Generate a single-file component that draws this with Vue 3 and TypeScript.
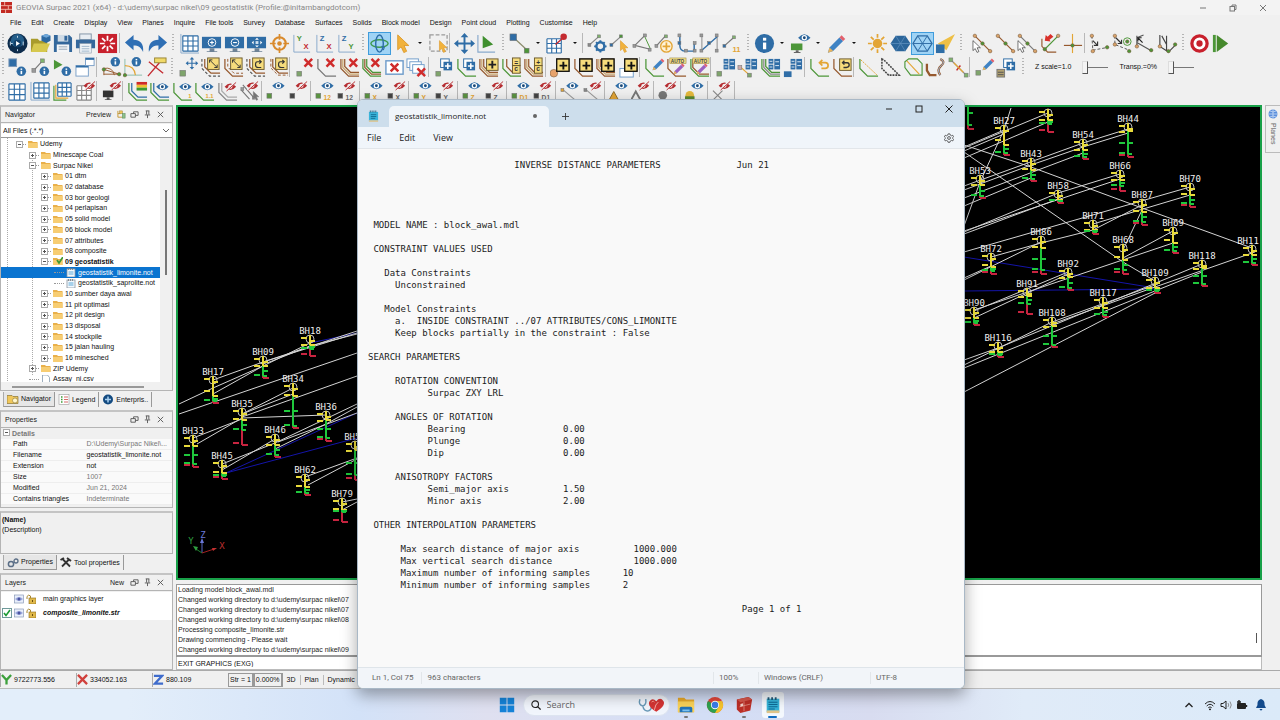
<script setup lang="ts">
import { ref } from 'vue'

const B = '#2f6da6'
const G = '#4c9638'
const O = '#e3a535'
const R = '#c42a30'
const T = '#96592e'

/* ---------- icon building blocks (22 x 22 grid) ---------- */
const sq = (x: number, y: number, c: string, s = 4) =>
  `<rect x="${x}" y="${y}" width="${s}" height="${s}" fill="${c}" stroke="#777" stroke-width=".6"/>`
const dot = (x: number, y: number, c: string, r = 1.8) =>
  `<circle cx="${x}" cy="${y}" r="${r}" fill="${c}" stroke="#7a5a3a" stroke-width=".6"/>`
const ln = (d: string, c: string, w = 1.2, dash = '') =>
  `<path d="${d}" fill="none" stroke="${c}" stroke-width="${w}" ${dash ? `stroke-dasharray="${dash}"` : ''}/>`
const txt = (x: number, y: number, t: string, c: string, s = 7) =>
  `<text x="${x}" y="${y}" font-size="${s}" font-weight="700" fill="${c}" font-family="Liberation Sans, Arial, sans-serif">${t}</text>`
const eye = (x: number, y: number, off = false) =>
  off
    ? `<path d="M${x - 6} ${y}q6-7 12 0q-6 7-12 0z" fill="#b52c30"/><circle cx="${x}" cy="${y}" r="2.2" fill="#fff" opacity=".85"/>${ln(`M${x - 5} ${y + 4.5}L${x + 5} ${y - 4.5}`, '#f0f0f0', 2)}${ln(`M${x - 4} ${y + 4.5}L${x + 6} ${y - 4.5}`, '#b52c30', 1)}`
    : `<path d="M${x - 6.5} ${y}q6.5-7.5 13 0q-6.500 7.500-13 0z" fill="${B}"/><circle cx="${x}" cy="${y}" r="2.800" fill="#fff"/><circle cx="${x}" cy="${y}" r="1.500" fill="#1c4a78"/>`
const info = (x: number, y: number, r = 5) =>
  `<circle cx="${x}" cy="${y}" r="${r}" fill="${B}"/><rect x="${x - r * 0.16}" y="${y - r * 0.1}" width="${r * 0.34}" height="${r * 0.7}" fill="#fff"/><rect x="${x - r * 0.16}" y="${y - r * 0.6}" width="${r * 0.34}" height="${r * 0.3}" fill="#fff"/>`
const monitor = (g: string) =>
  `<rect x="1" y="4" width="20" height="12" fill="${B}"/><path d="M9 16h5v3h3v1H6v-1h3z" fill="#6d8296"/>${g}`
const bend = (c: string, o = 0, w = 1.3, dash = '') =>
  ln(`M${2 + o} ${2}V${12 - o / 2}L${10 + o / 2} ${20 - o}H21`, c, w, dash)
const bends = bend(T) + bend('#c9a56c', 2) + bend(T, 4)
const cross = (x: number, y: number, s = 4) =>
  ln(`M${x - s} ${y - s}L${x + s} ${y + s}M${x + s} ${y - s}L${x - s} ${y + s}`, '#cf2b2b', 2.6)
const tile = (x: number, y: number, g = '', s = 12) =>
  `<rect x="${x}" y="${y}" width="${s}" height="${s}" fill="#f6dc7c" stroke="#6c5a2c" stroke-width="1"/>${g}`
const plus = (x: number, y: number, s: number, c: string, w = 1.6) =>
  ln(`M${x - s} ${y}H${x + s}M${x} ${y - s}V${y + s}`, c, w)
const copies =
  `<rect x="8" y="2" width="9" height="9" fill="#fff" stroke="${B}"/><rect x="11" y="5" width="9" height="9" fill="${B}"/>` + plus(15.5, 9.5, 3, '#fff')
const grid = (x: number, y: number, s: number, c = B) =>
  `<rect x="${x}" y="${y}" width="${s}" height="${s}" fill="#fff"/>` +
  ln(
    [0, 1, 2, 3].map(i => `M${x + (s * i) / 3} ${y}v${s}M${x} ${y + (s * i) / 3}h${s}`).join(''),
    c,
    1.2,
  )
const pencil = (x: number, y: number, s = 1, c = '#3f83c4') =>
  `<g transform="translate(${x} ${y}) scale(${s})"><path d="M0 16l1.500-5L11 1.500l3.500 3.500L5 14.500z" fill="${c}"/><path d="M0 16l1.500-5L5 14.500z" fill="#e9b35c"/><path d="M11 1.500L13-.5 16.500 3l-2 2z" fill="#e2606c"/></g>`
const pointer = (x: number, y: number, c: string, st = '#fff', s = 1) =>
  `<path transform="translate(${x} ${y}) scale(${s})" d="M0 0v13l3-2.600 2.300 5 2.500-1.100-2.300-5h4.200z" fill="${c}" stroke="${st}" stroke-width=".8"/>`
const axes = (a: string, ca: string, b: string, cb: string) =>
  ln('M3 2V20H20', '#88a9cc', 1) + txt(6, 8, a, ca, 8) + txt(13, 17, b, cb, 8)
const blocks = (x: number) =>
  `<rect x="${x}" y="2" width="5" height="5" fill="${B}"/><rect x="${x}" y="8" width="5" height="5" fill="${B}"/><rect x="${x + 6}" y="2" width="6" height="11" fill="${B}"/>` +
  ln(`M${x + 1} 4.500h3M${x + 1} 10.500h3M${x + 7} 5h4M${x + 7} 9h4`, '#dbe8f5', 1)
const diag = ln('M10 4L18 12M10 7V4H13M18 9V12H15', '#333', 1)
const turn = ln('M17 5H13Q11 5 11 8T14 11H17M15 3l2 2-2 2', '#333', 1.2)
const frame = '<rect x="7" y="2" width="13" height="13" fill="none" stroke="#111" stroke-width="1.300"/>'

const icons: Record<string, string> = {
  compass: `<circle cx="11" cy="11" r="10.500" fill="#0d2c4c"/><circle cx="11" cy="8" r="7" fill="#2f78aa" opacity=".65"/><circle cx="11" cy="11" r="4" fill="#123f68"/><path d="M9.500 8.500l4 2.500-4 2.500z" fill="#fff"/>` + ln('M3.500 9v4M4 11h2M17 9v4M11 3v2M11 17v2', '#c9dceb', 1),
  open: `<path d="M1 6h7l2 2h8v12H1z" fill="#a89b2c"/><path d="M4 11h17l-4 9H1z" fill="#d6c84e"/><path d="M12 3l5-2 4.500 2v5l-4.500 2.500L12 8z" fill="#2c68a0"/><path d="M12 3l5 2 4.500-2L17 1z" fill="#6ea6d8"/>`,
  save: `<path d="M2 2h16l3 3v15H2z" fill="#33679b"/><rect x="6" y="2" width="11" height="7" fill="#cfdbe6"/><rect x="13" y="3" width="3" height="5" fill="#33679b"/><rect x="5" y="12" width="13" height="8" fill="#f3f5f7"/>` + ln('M7 14.500h9M7 17h9', '#95a5b5', 1),
  print: `<rect x="5" y="1" width="12" height="6" fill="#e8edf2" stroke="#8293a5"/><path d="M1 7h20v9H1z" fill="#35689c"/><rect x="5" y="11" width="12" height="10" fill="#eef3f7" stroke="#8293a5" stroke-width=".6"/>` + ln('M7 14h8M7 16.500h8M7 19h8', '#9db4ca', 1),
  burst: `<rect x="1" y="1" width="20" height="20" fill="#c8202c"/>` + ln('M11 3v5M11 14v5M3 11h5M14 11h5M5.300 5.300l3.500 3.500M13.200 13.200l3.500 3.500M16.700 5.300l-3.500 3.500M8.800 13.200l-3.500 3.500', '#fff', 1.8),
  undo: `<path d="M1 10L10 2v5c7 0 11 4 10 13-2-5-5-7-10-7v5z" fill="#2f6fb4"/>`,
  redo: `<path d="M21 10L12 2v5c-7 0-11 4-10 13 2-5 5-7 10-7v5z" fill="#2f6fb4"/>`,
  grid: ln('M2 1V21H21', '#88a9cc', 1) + grid(4, 3, 16),
  zin: monitor(`<circle cx="11.500" cy="10" r="4" fill="none" stroke="#fff"/>` + plus(11.5, 10, 2, '#fff', 1.2)),
  zout: monitor(`<circle cx="11.500" cy="10" r="4" fill="none" stroke="#fff"/>` + ln('M9.500 10h4', '#fff', 1.2)),
  zall: monitor('<path d="M11.500 5l2 2h-4zM11.500 15l2-2h-4zM6 10l2-2v4zM17 10l-2-2v4z" fill="#fff"/><rect x="10" y="8.500" width="3" height="3" fill="#cfe0f0"/>'),
  aim: `<circle cx="11" cy="11" r="6.500" fill="none" stroke="#d98a2c" stroke-width="2.200"/><circle cx="11" cy="11" r="2.400" fill="#d98a2c"/>` + ln('M11 1v6M11 15v6M1 11h6M15 11h6', '#d98a2c', 1.8),
  yx: axes('Y', G, 'X', R),
  zx: axes('Z', B, 'X', R),
  zy: axes('Z', B, 'Y', G),
  orbit: `<ellipse cx="11" cy="11" rx="9" ry="4" fill="none" stroke="#3f9a4c" stroke-width="1.500"/><ellipse cx="11" cy="11" rx="4" ry="9" fill="none" stroke="#2c6ea8" stroke-width="1.500"/>` + ln('M13 14l3 1-1 3', '#2c6ea8'),
  arrow: pointer(6, 2, '#f1b23c', '#dd9a2c', 1.2),
  marquee: `<rect x="2" y="2" width="18" height="17" fill="none" stroke="#999" stroke-width="1.300" stroke-dasharray="4 2"/>` + pointer(12, 8, '#f1b23c', '#dd9a2c', 0.8),
  move: `<path d="M11 0l4 4.500h-3v5.500h5.500V7L22 11l-4.500 4v-3H12v5.500h3L11 22l-4-4.500h3V12H4.500v3L0 11l4.500-4v3H10V4.500H7z" fill="${B}"/>`,
  tri: ln('M2 2V20H20', '#88a9cc', 1.2) + `<path d="M7 3l11 9-11 4z" fill="#3f8f2e"/>`,
  seg: ln('M5 5L18 17', '#8a8a6a', 1.2) + sq(1, 1, B, 7) + sq(16, 16, G, 5),
  pin: grid(1, 6, 15) + ln('M18 5L10 12', R, 1.5) + `<circle cx="18.500" cy="4" r="3.400" fill="${R}"/>`,
  gear: ln('M3 12L12 4', '#888') + sq(1, 11, '#888', 3) + sq(11, 2, '#7fb36c', 3) + `<circle cx="14" cy="14" r="4.200" fill="none" stroke="${B}" stroke-width="2.600"/>` + ln('M14 7.500v3M14 17.500v3M7.500 14h3M17.500 14h3M9.500 9.500l2 2M16.500 16.500l2 2M18.500 9.500l-2 2M11.500 16.500l-2 2', B, 2),
  segptr: ln('M3 12L12 4', '#888') + sq(1, 11, B, 3) + sq(11, 2, G, 3) + pointer(12, 8, '#f1b23c', '#dd9a2c', 0.8),
  tripts: ln('M3 13L13 3M3 13L19 17', '#777') + ln('M13 3L19 16', G, 1) + sq(1, 12, '#999', 3) + sq(12, 1, '#999', 3) + sq(17, 16, '#999', 3),
  addpt: ln('M3 13L12 3', '#777') + sq(1, 12, '#999', 3) + sq(11, 2, '#7fb36c', 3) + `<circle cx="13" cy="14" r="6" fill="#fff3d8" stroke="${O}" stroke-width="1.400"/>` + plus(13, 14, 4, O, 1.8),
  ells: ln('M3 4V13Q3 19 9 19H18V11', B, 1.5) + sq(1, 1, '#999', 3) + sq(1, 9, B, 3) + sq(8, 17, '#999', 3) + sq(17, 17, '#999', 3) + sq(17, 9, '#999', 3),
  enn: ln('M3 3V19M19 3V19', '#999') + ln('M3 18L19 4', B, 1.4) + sq(1, 1, '#999', 3) + sq(1, 17, '#999', 3) + sq(17, 1, '#999', 3) + sq(17, 17, '#999', 3) + sq(9, 9, B, 3),
  ones: ln('M3 13L12 5', '#777') + sq(1, 12, B, 3) + sq(11, 3, '#7fb36c', 3) + txt(11, 20, '11', O, 8),
  info: info(11, 11, 10),
  moneye: `<rect x="1" y="11" width="12" height="7" fill="${G}"/><path d="M6 18h3v2h2v1H4v-1h2z" fill="#666"/>` + eye(15, 5),
  pencil: pencil(2, 3, 1.1),
  sun: `<circle cx="11" cy="11" r="5" fill="${O}"/>` + ln('M11 1v4M11 17v4M1 11h4M17 11h4M4 4l3 3M15 15l3 3M18 4l-3 3M7 15l-3 3', O, 1.8),
  hex: `<path d="M6 3h10l5.500 8-5.500 8H6L.5 11z" fill="#2b659a"/>` + ln('M6 3l10 16M16 3L6 19M1 11h20', '#5d8fbd', 0.8),
  hexw: `<path d="M6 3h10l5 8-5 8H6L1 11z" fill="none" stroke="${B}" stroke-width="1.300"/>` + ln('M6 3l10 16M16 3L6 19M1 11h20', B, 1),
  cone: `<path d="M21 1L3 11l9 7z" fill="#eebf45"/><rect x="1" y="12" width="9" height="9" fill="${B}"/>`,
  l1: ln('M2 2L20 20', T) + dot(3, 3, '#d9a36a') + dot(11, 11, G) + dot(19, 19, '#d9a36a') + pointer(1, 8, '#fff', '#222', 0.8),
  l2: ln('M2 2L20 20', T) + dot(3, 3, '#d9a36a') + dot(11, 11, G) + dot(19, 19, '#d9a36a'),
  l3: ln('M2 2L20 20', '#777') + dot(3, 3, '#d9a36a') + dot(11, 11, G) + dot(19, 19, '#d9a36a') + pointer(1, 8, '#fff', '#222', 0.8),
  l4: ln('M2 6V14L8 20H17', T) + ln('M5 17L19 3', G) + `<path d="M5 8l1-6 2 2 3-3 3 3-4 3 1 2z" fill="#d9302a"/>` + dot(19, 3, '#d9a36a') + dot(5, 17, G),
  l5: ln('M11 1V21', O) + ln('M2 13H21', T) + dot(11, 13, G),
  l6: ln('M3 3L4 18L20 15', '#555', 1, '3 2') + ln('M4 8l5 5M9 9v4H5', '#333', 1.2) + dot(3, 3, '#d9a36a') + dot(4, 19, '#d9a36a') + dot(19, 15, G),
  l7: ln('M3 3L3 12L18 18', '#555', 1, '3 2') + `<circle cx="16" cy="9" r="4" fill="none" stroke="${G}"/>` + ln('M4 5l6 6M10 7v4H6', '#333', 1.2) + dot(3, 3, '#d9a36a') + dot(3, 12, '#d9a36a') + dot(16, 9, G) + dot(18, 19, G),
  l8: ln('M3 3V14M3 5L10 2M3 10L19 19', '#555', 1.2) + ln('M4 5l5 5M4 9V5H8', '#222', 1.2) + dot(3, 14, '#d9a36a') + dot(18, 18, G),
  l9: ln('M3 2V14L12 20L20 12M5 3L10 12M10 3V18', '#444', 1.2) + dot(3, 14, '#d9a36a') + dot(12, 19, G) + dot(19, 12, G),
  target: `<circle cx="11" cy="11" r="8" fill="#fff" stroke="#c8202c" stroke-width="3.400"/><circle cx="11" cy="11" r="3.300" fill="#c8202c"/>`,
  play: `<rect x="2" y="2" width="3" height="18" fill="${G}"/><path d="M6 2l12 9-12 9z" fill="#46892c"/>`,

  sqinfo: `<rect x="2" y="2" width="8" height="8" fill="${B}" stroke="#7b98b8"/>` + info(15, 15),
  seginfo: ln('M4 14L13 4', '#777') + sq(2, 12, '#999') + sq(11, 2, '#7fb36c') + info(15, 15),
  triinfo: `<path d="M2 3l9 5-9 5z" fill="${G}"/>` + info(15, 15),
  win: `<rect x="1" y="9" width="13" height="11" fill="#fff" stroke="#7ba0c8"/><rect x="1" y="9" width="13" height="2" fill="${B}"/><rect x="11" y="1" width="9" height="8" fill="#fff" stroke="#7ba0c8"/><rect x="11" y="1" width="9" height="2" fill="${B}"/>`,
  arcinfo: ln('M3 13L19 18H3M3 13V19M3 12Q12 10 14 19', T, 1) + dot(3, 13, G) + dot(19, 18, G) + info(15, 5),
  anginfo: ln('M2 2V19H20', '#8ba', 1) + ln('M2 9Q12 9 13 19', O) + dot(2, 19, G) + info(14, 5),
  ruler: ln('M2 20L14 6M3 5L18 17', R, 1.4) + `<rect x="9" y="1" width="12" height="5" fill="#f0d968" stroke="#998536"/>`,
  sqmove: sq(2, 14, '#7fa56c', 6) + `<path transform="translate(8 0) scale(.6)" d="M11 0l4 4.500h-3v5.500h5.500V7L22 11l-4.500 4v-3H12v5.500h3L11 22l-4-4.500h3V12H4.500v3L0 11l4.500-4v3H10V4.500H7z" fill="${B}"/>`,
  t1: bend('#555', 0, 1.2, '3 2') + bend(T, 3) + tile(8, 1, `<g transform="translate(0 -1)">${diag}</g>`),
  t2: bend(T) + bend(T, 3, 1, '3 2') + tile(8, 1, `<g transform="translate(0 -1)">${diag}</g>`),
  t3: bend('#555', 0, 1.2, '3 2') + bend(T, 3) + tile(8, 1, turn),
  t4: bend(T, 1, 1, '3 2') + bend(T, 3) + tile(8, 1, turn),
  d1: sq(3, 15, '#7fa56c', 5) + cross(15, 6),
  d2: bend('#777') + cross(15, 6),
  d3: bends + cross(15, 6),
  d4: bend(G) + bend(T, 2) + bend(G, 4) + cross(15, 6),
  d5: `<rect x="2" y="4" width="18" height="14" fill="#fff" stroke="#6f9cca" stroke-width="1.500"/>` + cross(11, 11),
  d6: `<rect x="1" y="2" width="12" height="9" fill="#fff" stroke="#6f9cca"/><rect x="4" y="5" width="12" height="9" fill="#fff" stroke="#6f9cca"/><rect x="7" y="8" width="12" height="9" fill="#fff" stroke="#6f9cca"/>` + cross(16, 16),
  c1: sq(3, 15, '#7fa56c', 5) + copies,
  c2: bend(G) + copies,
  c3: bends + tile(9, 2, plus(15, 8, 4, '#222', 2)),
  c4: bend(G) + bend(T, 4) + tile(12, 1, txt(14, 8, '=', '#333'), 8) + tile(12, 9, txt(14, 15, 'c', '#333'), 8),
  c5: bends + tile(12, 1, txt(14, 8, '+', '#333'), 8) + tile(12, 9, txt(14, 15, 'c', '#333'), 8),
  p1: dot(4, 17, '#e7a36c', 4) + tile(7, 2, plus(14, 9, 4, '#111', 2) + frame, 13),
  p2: bend(T) + tile(7, 2, plus(14, 9, 4, '#111', 2) + frame, 13),
  p3: bends + tile(7, 2, plus(14, 9, 4, '#111', 2) + frame, 13),
  p4: `<rect x="2" y="12" width="14" height="9" fill="#fff" stroke="#6f9cca"/>` + tile(7, 2, plus(14, 9, 4, '#111', 2) + frame, 13),
  e1: bend(G) + pencil(9, 2, 0.75),
  e2: bend(T) + `<rect x="4" y="1" width="17" height="6" fill="#f2df86" stroke="#9c8a48" stroke-width=".6"/>` + txt(5, 6, 'AUTO', '#444', 5) + pencil(8, 7, 0.7, '#9a62c0'),
  e3: bend(G) + bend(T, 2) + `<rect x="4" y="1" width="17" height="6" fill="#f2df86" stroke="#9c8a48" stroke-width=".6"/>` + txt(5, 6, 'AUTO', '#444', 5) + pencil(8, 7, 0.7, '#9a62c0'),
  b1: sq(2, 15, '#7fa56c', 5) + blocks(9),
  b2: ln('M3 10L12 18', O) + sq(1, 9, '#caa') + sq(11, 17, '#7fa56c') + blocks(9),
  b3: bend(G) + bend('#888', 2) + bend(G, 4) + blocks(9),
  b4: `<rect x="2" y="15" width="8" height="6" fill="${B}"/>` + blocks(9),
  u1: bend(G) + ln('M11 6H17Q20 6 20 9T17 12H13M14 3l-3 3 3 3', O, 1.8),
  u2: bend(T) + tile(8, 2, ln('M11 6H16Q18 6 18 8.500T15 11H12M13 4l-2 2 2 2', '#333', 1.4)),
  k1: bend(G) + ln('M3 3L20 19', O, 1, '2 1'),
  k2: ln('M2 2V12L9 19H20L4 3z', '#444', 1.6, '2 1'),
  k3: ln('M2 11V5L6 2H15L20 7V19H8z', G) + ln('M4 4L17 18', O),
  k4: ln('M2 7V14L5 19H12M16 2Q22 5 17 9T16 19', T, 2.4) + ln('M16 2Q22 5 17 9T16 19', '#9dc0e4', 1),
  k5: ln('M2 2L20 20', '#888') + ln('M9 14l4-5', R, 1.6) + sq(1, 1, '#7fb36c') + sq(17, 17, '#7fb36c') + ln('M6 6L16 16', O),
  k6: sq(2, 14, '#7fa56c', 5) + pencil(9, 2, 0.75),
  k7: `<rect x="1" y="13" width="8" height="8" fill="#b0a070" stroke="#777"/>` + ln('M2 16h6M2 18.500h6', '#555', 1) + copies,

  g1: grid(2, 3, 17),
  g2: ln('M1 1V20H21', '#88a9cc', 1) + grid(4, 2, 16),
  g3: ln('M2 5V20H15', G) + ln('M4 4V18H17', O) + grid(6, 2, 14),
  g4: grid(2, 5, 15, '#888') + eye(15, 5, true),
  g5: `<rect x="2" y="10" width="11" height="7" fill="#333"/><path d="M6 17h3v2h2v1H4v-1h2z" fill="#555"/>` + eye(15, 5, true),
  s1: bend(G) + bend(B, 3) + '<rect x="10" y="1" width="11" height="3" fill="#d02a2a"/><rect x="10" y="4" width="11" height="3" fill="#f0c030"/><rect x="10" y="7" width="11" height="3" fill="#3c9a34"/>',
  s2: bend(G) + bend(B, 3) + eye(14, 6),
  s3: bend(G) + eye(14, 6) + txt(17, 18, '1', O, 6),
  s4: bend(G) + eye(14, 6) + txt(12, 18, '1.1', O, 6),
  s5: bend('#888') + bend('#aaa', 3) + eye(14, 6, true),
  s6: ln('M4 4L16 18M2 9L11 19', '#777') + sq(2, 7, '#999', 3) + sq(14, 16, '#999', 3) + eye(14, 5, true) + pointer(15, 11, '#777', '#777', 0.6),
}

const pairs: [string, string][] = [['n', ''], ['t', '12'], ['x', 'X'], ['y', 'Y'], ['z', 'Z'], ['d', 'D1']]
pairs.forEach(([k, t]) => {
  icons[k + 'on'] = eye(13, 5) + sq(1, 13, '#5a9440', 5) + txt(9, 20, t, O, 7)
  icons[k + 'off'] = eye(13, 5, true) + sq(1, 13, '#444', 5) + txt(9, 20, t, '#666', 7)
})
icons.lon = ln('M3 9L16 20', '#999') + sq(1, 8, O, 3) + eye(13, 5)
icons.loff = ln('M3 9L16 20', '#999') + sq(1, 8, '#888', 3) + eye(13, 5, true)
icons.won = `<path d="M5 11l5 9H0z" fill="${O}" stroke="#8a6a2a"/>` + eye(13, 5)
icons.woff = `<path d="M5 11l5 9H0z" fill="none" stroke="#777" stroke-width="2"/>` + eye(13, 5, true)
icons.coff = '<circle cx="5" cy="15" r="4.500" fill="#777"/>' + eye(13, 5, true)
icons.hon = '<circle cx="5" cy="15" r="4.500" fill="#e4b93c"/><path d="M0 16h10v3H0z" fill="#5a8a30"/>' + eye(13, 5)
icons.xroff = ln('M1 10L11 20M11 10L1 20', '#888') + eye(13, 5, true)

/* "|" separator, ":" grip, "." narrow gap, "v" drop-down arrow */
const rows: string[][] = [
  'compass open save print burst | undo redo : grid zin zout zall aim yx zx zy : orbit arrow v marquee | move tri : seg v pin v | gear segptr tripts addpt ells enn ones : info v moneye v pencil v . sun hex hexw cone : . l1 l2 l3 l4 l5 | l6 l7 l8 l9 : target play',
  'sqinfo seginfo triinfo win | arcinfo anginfo ruler : sqmove t1 t2 t3 t4 | d1 d2 d3 d4 d5 d6 | c1 c2 c3 c4 c5 | p1 p2 p3 p4 | e1 e2 e3 | b1 b2 b3 b4 | u1 u2 | k1 k2 k3 k4 k5 | k6 k7 :',
  'g1 g2 g3 g4 | g5 | s1 s2 s3 s4 s5 s6 | non noff | ton toff | xon xoff | yon yoff | zon zoff | don doff | lon loff | won woff | coff | hon | xroff |',
].map(r => r.split(' '))
const selectedTools = ['orbit', 'hexw']

const menus = ['File', 'Edit', 'Create', 'Display', 'View', 'Planes', 'Inquire', 'File tools', 'Survey', 'Database', 'Surfaces', 'Solids', 'Block model', 'Design', 'Point cloud', 'Plotting', 'Customise', 'Help']

/* ---------- navigator ---------- */
interface Node { t: string; d: number; k: 'open' | 'closed' | 'file' | 'sheet'; b?: boolean }
const tree: Node[] = [
  { t: 'Udemy', d: 1, k: 'open' },
  { t: 'Minescape Coal', d: 2, k: 'closed' },
  { t: 'Surpac Nikel', d: 2, k: 'open' },
  ...['01 dtm', '02 database', '03 bor geologi', '04 perlapisan', '05 solid model', '06 block model', '07 attributes', '08 composite'].map(t => ({ t, d: 3, k: 'closed' }) as Node),
  { t: '09 geostatistik', d: 3, k: 'open', b: true },
  { t: 'geostatistik_limonite.not', d: 4, k: 'file' },
  { t: 'geostatistik_saprolite.not', d: 4, k: 'file' },
  ...['10 sumber daya awal', '11 pit optimasi', '12 pit design', '13 disposal', '14 stockpile', '15 jalan hauling', '16 minesched'].map(t => ({ t, d: 3, k: 'closed' }) as Node),
  { t: 'ZIP Udemy', d: 2, k: 'closed' },
  { t: 'Assay_ni.csv', d: 2, k: 'sheet' },
]
const selectedNode = ref('geostatistik_limonite.not')

const details = [
  ['Path', 'D:\\Udemy\\Surpac Nikel\\...'],
  ['Filename', 'geostatistik_limonite.not'],
  ['Extension', 'not'],
  ['Size', '1007'],
  ['Modified', 'Jun 21, 2024'],
  ['Contains triangles', 'Indeterminate'],
]
const editable = ['Filename', 'Extension']

const log = [
  'Loading model block_awal.mdl',
  'Changed working directory to d:\\udemy\\surpac nikel\\07',
  'Changed working directory to d:\\udemy\\surpac nikel\\07',
  'Changed working directory to d:\\udemy\\surpac nikel\\08',
  'Processing composite_limonite.str',
  'Drawing commencing - Please wait',
  'Changed working directory to d:\\udemy\\surpac nikel\\09',
]

/* ---------- drillholes: label, x, collar y, end of yellow / green / red ---------- */
type Hole = [string, number, number, number, number, number]
const holes: Hole[] = [
  ['BH17', 213, 380, 396, 401, 403], ['BH09', 263, 360, 366, 376, 378], ['BH18', 310, 339, 345, 349, 356],
  ['BH34', 293, 387, 396, 426, 428], ['BH35', 242, 412, 420, 430, 445], ['BH33', 193, 439, 446, 464, 467],
  ['BH36', 326, 415, 420, 438, 441], ['BH46', 275, 438, 445, 455, 457], ['BH45', 222, 464, 473, 476, 479],
  ['BH62', 305, 478, 487, 493, 495], ['BH79', 342, 502, 510, 512, 522], ['BH51', 355, 445, 450, 475, 480],
  ['BH27', 1004, 129, 145, 153, 155], ['', 1048, 113, 120, 124, 132], ['BH44', 1128, 127, 131, 154, 157],
  ['BH54', 1083, 143, 150, 157, 159], ['BH43', 1031, 162, 170, 179, 181], ['BH53', 980, 179, 185, 196, 198],
  ['BH66', 1120, 174, 180, 186, 191], ['BH70', 1190, 187, 195, 204, 207], ['BH58', 1058, 194, 200, 201, 203],
  ['BH87', 1142, 203, 212, 222, 225], ['BH71', 1093, 224, 230, 232, 234], ['BH69', 1173, 231, 243, 251, 253],
  ['BH86', 1041, 240, 248, 270, 274], ['BH68', 1123, 248, 260, 270, 274], ['BH11', 1252, 249, 255, 263, 265],
  ['BH72', 991, 257, 267, 271, 274], ['BH118', 1202, 264, 268, 284, 286], ['BH92', 1068, 272, 277, 288, 290],
  ['BH109', 1155, 281, 288, 291, 293], ['BH91', 1027, 292, 296, 304, 314], ['BH117', 1103, 301, 308, 315, 317],
  ['BH90', 974, 311, 318, 323, 325], ['BH108', 1052, 321, 326, 345, 347], ['BH116', 998, 346, 352, 355, 357],
  ['', 968, 100, 101, 125, 129],
]
const ticks = (h: Hole) => {
  const [, x, y, a, b, c] = h
  return {
    yellow: `M${x - 9} ${y - 1}h6M${x - 9} ${Math.round((y + a) / 2) + 3}h6M${x} ${y + 2}h5M${x} ${a}h5`,
    green: `M${x - 9} ${b - 1}h6M${x} ${Math.round((a + b) / 2)}h5M${x} ${b}h4` + (b - a > 12 ? `M${x - 9} ${Math.round((a + b) / 2)}h6` : ''),
    red: `M${x} ${c}h6` + (c - b > 2 ? `M${x - 9} ${c - 2}h6` : ''),
  }
}
const white =
  'M213 380L263 362L357 331M179 404L213 388L263 366L310 343M179 414L357 353M213 394L263 366M263 362L357 333M267 363L310 346L357 334M242 414L293 394M242 417L357 376M242 418L326 415M193 438L242 419M197 444L242 418M242 414L293 388M222 464L275 443L357 404M222 470L275 439M275 449L326 424L357 407M278 442L357 413M305 477L357 458M308 485L357 459M342 502L357 499M342 510L357 502' +
  'M964 148L1048 113M964 147L1004 130M964 151L1004 134M964 158L1048 122M1011 108L1004 130L980 182L964 226M964 145L1031 167L1142 208L1252 248M964 152L1036 202L1123 262L1155 281M964 186L1083 143L1128 129M964 190L1031 165L1083 147L1128 133M964 198L1083 153M964 206L1031 178' +
  'M964 232L1058 193L1120 174M964 231L1120 179M964 234L1058 199M964 252L1190 187M1093 224L1190 195M991 257L1041 243L1093 230L1142 205M1142 210L1123 250M964 280L1041 242M964 278L991 266M974 311L1068 272M974 310L1173 243M974 318L1068 274M1123 258L1173 231' +
  'M964 360L998 348L1202 264M964 365L1052 322L1155 285M964 368L1202 272M1052 324L1155 287L1252 253M964 392L1155 293'
const blue = 'M226 473L357 413M226 473L357 438M310 343L357 333M964 257L1155 288M964 291L1155 289'

/* ---------- report ---------- */
const at = (...parts: [number, string][]) => parts.reduce((s, [c, t]) => s.padEnd(c) + t, '')
const report = ref(
  [
    at([27, 'INVERSE DISTANCE PARAMETERS'], [68, 'Jun 21']), '', '', '', '',
    at([1, 'MODEL NAME : block_awal.mdl']), '',
    at([1, 'CONSTRAINT VALUES USED']), '',
    at([3, 'Data Constraints']),
    at([5, 'Unconstrained']), '',
    at([3, 'Model Constraints']),
    at([5, 'a.  INSIDE CONSTRAINT ../07 ATTRIBUTES/CONS_LIMONITE']),
    at([5, 'Keep blocks partially in the constraint : False']), '',
    'SEARCH PARAMETERS', '',
    at([5, 'ROTATION CONVENTION']),
    at([11, 'Surpac ZXY LRL']), '',
    at([5, 'ANGLES OF ROTATION']),
    at([11, 'Bearing'], [36, '0.00']),
    at([11, 'Plunge'], [36, '0.00']),
    at([11, 'Dip'], [36, '0.00']), '',
    at([5, 'ANISOTROPY FACTORS']),
    at([11, 'Semi_major axis'], [36, '1.50']),
    at([11, 'Minor axis'], [36, '2.00']), '',
    at([1, 'OTHER INTERPOLATION PARAMETERS']), '',
    at([6, 'Max search distance of major axis'], [49, '1000.000']),
    at([6, 'Max vertical search distance'], [49, '1000.000']),
    at([6, 'Maximum number of informing samples'], [47, '10']),
    at([6, 'Minimum number of informing samples'], [47, '2']), '',
    at([69, 'Page 1 of 1']),
  ].join('\n'),
)
const zScale = ref(0)
const transparency = ref(0)
const command = ref('EXIT GRAPHICS (EXG)')
</script>

<template>
  <div class="desktop">
    <div class="app">
      <header class="titlebar">
        <svg class="logo" viewBox="0 0 12 12"><rect width="12" height="12" fill="#c22a22" /><path d="M0 4h12M0 8h12M4 0v4M8 4v4M5 8v4" stroke="#f2b8a8" stroke-width="1" /></svg>
        <span>GEOVIA Surpac 2021 (x64) - d:\udemy\surpac nikel\09 geostatistik (Profile:@initambangdotcom)</span>
        <div class="winbtns">
          <button aria-label="Minimise"><svg viewBox="0 0 8 8"><path d="M1 4h6" /></svg></button>
          <button aria-label="Restore"><svg viewBox="0 0 8 8"><rect x="1" y="2.500" width="4.500" height="4.500" /><path d="M3 2.500V1h4v4.500H5.500" /></svg></button>
          <button aria-label="Close"><svg viewBox="0 0 8 8"><path d="M1 1l6 6M7 1L1 7" /></svg></button>
        </div>
      </header>
      <nav class="menubar">
        <i class="grip"></i>
        <button v-for="m in menus" :key="m">{{ m }}</button>
      </nav>
      <div class="toolbars">
        <div v-for="(row, r) in rows" :key="r" class="toolbar">
          <i class="grip first"></i>
          <template v-for="(item, i) in row" :key="i">
            <i v-if="item === '|'" class="sep"></i>
            <i v-else-if="item === ':'" class="grip"></i>
            <i v-else-if="item === '.'" class="nudge"></i>
            <button v-else-if="item === 'v'" class="caret" aria-label="More"></button>
            <button v-else class="tool" :class="{ on: selectedTools.includes(item), half: i % 2 }" :aria-label="item">
              <svg viewBox="0 0 22 22" v-html="icons[item]"></svg>
            </button>
          </template>
          <div v-if="r === 1" class="sliders">
            <label for="zs">Z scale=1.0</label><input id="zs" v-model="zScale" type="range" />
            <label for="tp">Transp.=0%</label><input id="tp" v-model="transparency" type="range" />
          </div>
        </div>
      </div>

      <div class="body">
        <aside class="side">
          <section class="panel nav">
            <h2 class="head">Navigator<span class="push">Preview</span>
              <svg class="hi" viewBox="0 0 10 10"><path d="M1 1v7h5M1 4h3" fill="none" stroke="#c4952c" /><rect x="3" y="1" width="3" height="3" fill="#f0c75a" stroke="#a88a3c" stroke-width=".6" /><rect x="6" y="4" width="3" height="5" fill="#8fc08a" stroke="#5a8a5a" stroke-width=".6" /></svg>
              <svg class="hi" viewBox="0 0 10 10"><path d="M1 4h5v4H1zM4 4V2h5v4H6" fill="none" stroke="#555" /></svg>
              <svg class="hi" viewBox="0 0 10 10"><path d="M3 1h4M4 1v4M6.500 1v4M2 5.500h6M5 5.500V9" fill="none" stroke="#555" /></svg>
              <svg class="hi" viewBox="0 0 10 10"><path d="M2 2l6 6M8 2L2 8" fill="none" stroke="#555" /></svg>
            </h2>
            <select class="filter" aria-label="File filter"><option>All Files (.*.*)</option></select>
            <div class="treebox">
              <ul class="tree">
                <li v-for="n in tree" :key="n.t" :class="['d' + n.d, { sel: n.t === selectedNode, bold: n.b }]" @click="selectedNode = n.t">
                  <span v-if="n.k === 'open' || n.k === 'closed'" class="exp"><i :class="{ plus: n.k === 'closed' }"></i></span>
                  <span v-else class="twig"></span>
                  <svg v-if="n.k === 'open' || n.k === 'closed'" class="ico" viewBox="0 0 10 9">
                    <path d="M0 1h4l1 1h4.500v6H0z" fill="#e9b04a" /><path d="M0 3h9.500v5H0z" fill="#f7cd72" />
                    <path v-if="n.b" d="M4 3l2 3 4-6" fill="none" stroke="#3f9a34" stroke-width="1.800" />
                  </svg>
                  <svg v-else class="ico" viewBox="0 0 10 9">
                    <path v-if="n.k === 'sheet'" d="M1.500 0h5l2 2.500V9h-7z" fill="#fff" stroke="#8499ad" stroke-width=".8" />
                    <g v-else><rect x="1" y="1" width="8" height="8" fill="#f4f9fd" stroke="#8a96a2" stroke-width=".8" /><path d="M2.500 4h5M2.500 6h5" stroke="#5aa8d8" /><path d="M2 1h6" stroke="#777" stroke-dasharray="1 1" stroke-width="1.500" /></g>
                  </svg>
                  <span class="lbl">{{ n.t }}</span>
                </li>
              </ul>
              <i class="vbar"></i>
              <i class="hbar"></i>
            </div>
          </section>
          <div class="tabs">
            <button class="tab cur"><svg viewBox="0 0 12 10"><path d="M0 1h5l1 1h5v7H0z" fill="#f0c75a" stroke="#8a7434" stroke-width=".7" /><circle cx="8" cy="6" r="2.500" fill="#fff6cc" stroke="#9a8440" stroke-width=".7" /></svg>Navigator</button>
            <button class="tab"><svg viewBox="0 0 12 10"><rect x="1" y="0" width="10" height="10" fill="#fff" stroke="#999" stroke-width=".6" /><path d="M3 2.500h1.500M3 5h1.500M3 7.500h1.500" stroke="#3c9a34" stroke-width="1.500" /><path d="M6 2.500h4M6 5h4M6 7.500h4" stroke="#c44" stroke-width=".8" /></svg>Legend</button>
            <button class="tab"><svg viewBox="0 0 12 10"><circle cx="6" cy="5" r="5" fill="#134a80" /><path d="M3 5h6M6 2v6" stroke="#a8d0f0" stroke-width="1.500" /></svg>Enterpris..</button>
          </div>

          <section class="panel props">
            <h2 class="head">Properties<span class="push"></span>
              <svg class="hi" viewBox="0 0 10 10"><path d="M1 4h5v4H1zM4 4V2h5v4H6" fill="none" stroke="#555" /></svg>
              <svg class="hi" viewBox="0 0 10 10"><path d="M3 1h4M4 1v4M6.500 1v4M2 5.500h6M5 5.500V9" fill="none" stroke="#555" /></svg>
              <svg class="hi" viewBox="0 0 10 10"><path d="M2 2l6 6M8 2L2 8" fill="none" stroke="#555" /></svg>
            </h2>
            <table>
              <thead><tr><th colspan="2"><span class="exp"><i></i></span>Details</th></tr></thead>
              <tbody>
                <tr v-for="d in details" :key="d[0]"><td>{{ d[0] }}</td><td :class="{ ro: !editable.includes(d[0]) }">{{ d[1] }}</td></tr>
              </tbody>
            </table>
          </section>
          <section class="about"><b>(Name)</b><span>(Description)</span></section>
          <div class="tabs">
            <button class="tab cur"><svg viewBox="0 0 12 10"><circle cx="4" cy="6.500" r="2.600" fill="none" stroke="#5a6e86" stroke-width="1.500" /><circle cx="9" cy="3.500" r="2" fill="none" stroke="#5a6e86" stroke-width="1.300" /></svg>Properties</button>
            <button class="tab"><svg viewBox="0 0 12 10"><path d="M2 9L9 2M2 1l8 8" stroke="#333" stroke-width="1.800" /><path d="M7 .5l4 3M.5 2.500L4 .5" stroke="#333" stroke-width="2" /></svg>Tool properties</button>
          </div>

          <section class="panel layers">
            <h2 class="head">Layers<span class="push">New</span>
              <svg class="hi" viewBox="0 0 10 10"><path d="M1 4h5v4H1zM4 4V2h5v4H6" fill="none" stroke="#555" /></svg>
              <svg class="hi" viewBox="0 0 10 10"><path d="M3 1h4M4 1v4M6.500 1v4M2 5.500h6M5 5.500V9" fill="none" stroke="#555" /></svg>
              <svg class="hi" viewBox="0 0 10 10"><path d="M2 2l6 6M8 2L2 8" fill="none" stroke="#555" /></svg>
            </h2>
            <ul class="layerlist">
              <li v-for="(l, i) in ['main graphics layer', 'composite_limonite.str']" :key="l" :class="{ active: i === 1 }">
                <svg class="chk" viewBox="0 0 10 10"><g v-if="i === 1"><rect x=".5" y=".5" width="9" height="9" fill="#fff" stroke="#6f9a9a" /><path d="M2 5l2 2.500L8 2" fill="none" stroke="#1c9a34" stroke-width="1.600" /></g></svg>
                <svg class="chk" viewBox="0 0 10 10"><rect x=".5" y="1" width="9" height="8" fill="#e8eefa" stroke="#8a9ab8" stroke-width=".7" /><path d="M1 5q4-4 8 0q-4 4-8 0z" fill="#99a6dc" /><circle cx="5" cy="5" r="1.500" fill="#4a54a0" /></svg>
                <svg class="chk" viewBox="0 0 10 10"><rect x="3" y="4" width="7" height="6" fill="#e0b84a" stroke="#8a6c1c" stroke-width=".6" /><path d="M1 5V2.500Q2.500 0 4.500 2V4" fill="none" stroke="#a8862c" /><path d="M6.500 6v2" stroke="#6a5010" /></svg>
                <span>{{ l }}</span>
              </li>
            </ul>
          </section>
        </aside>

        <main class="work">
          <div class="viewport">
            <svg viewBox="178 107 1084 471" preserveAspectRatio="xMinYMin slice">
              <rect x="178" y="107" width="2000" height="1500" fill="#000" />
              <path :d="blue" class="blue" />
              <path :d="white" class="white" />
              <g v-for="(h, i) in holes" :key="i">
                <circle :cx="h[1]" :cy="h[2]" r="4" class="collar" />
                <path :d="`M${h[1]} ${h[2] - 4}V${h[3]}`" class="yel" />
                <path :d="`M${h[1]} ${h[3]}V${h[4]}`" class="grn" />
                <path :d="`M${h[1]} ${h[4]}V${h[5]}`" class="red" />
                <path :d="ticks(h).yellow" class="yel" />
                <path :d="ticks(h).green" class="grn" />
                <path :d="ticks(h).red" class="red" />
                <text v-if="h[0]" :x="Math.min(h[1], 1248)" :y="h[2] - 5" text-anchor="middle">{{ h[0] }}</text>
              </g>
              <path d="M202 553V542" class="az" /><path d="M202 538l2 5h-4z" class="fz" />
              <path d="M202 553L214 549" class="ax" /><path d="M217 548l-5 0 1 3z" class="fx" />
              <path d="M202 553L196 549" class="ay" /><path d="M193 546l5 1-2 4z" class="fy" />
              <text x="203" y="538" text-anchor="middle" class="fz">Z</text>
              <text x="222" y="549" text-anchor="middle" class="fx">X</text>
              <text x="191" y="544" text-anchor="middle" class="fy">Y</text>
            </svg>
          </div>
          <div class="log"><p v-for="(l, i) in log" :key="i">{{ l }}</p><i class="thumb"></i></div>
          <input v-model="command" class="cmd" aria-label="Command" />
        </main>
        <button class="planes"><svg viewBox="0 0 10 10"><circle cx="5" cy="5" r="4.500" fill="#5b8fdc" /><path d="M5 .5v9M.5 5h9M2 2q3 2 6 0M2 8q3-2 6 0" fill="none" stroke="#d3e2f8" stroke-width=".7" /></svg><span>Planes</span></button>
      </div>

      <footer class="status">
        <div class="coord"><svg viewBox="0 0 12 12"><path d="M1 1l5 5.500L11 1M6 6v5.500" stroke="#3ca03c" /></svg>9722773.556</div>
        <div class="coord"><svg viewBox="0 0 12 12"><path d="M1 1l10 10M11 1L1 11" stroke="#d0403c" /></svg>334052.163</div>
        <div class="coord"><svg viewBox="0 0 12 12"><path d="M1 2h9L2 10.500h9" stroke="#3f6ccc" /></svg>880.109</div>
        <span class="cell">Str = 1</span><span class="cell">0.000%</span>
        <span class="mode">3D</span><span class="mode">Plan</span><span class="mode">Dynamic</span>
      </footer>
    </div>

    <div class="taskbar">
      <div class="dock">
        <button aria-label="Start"><svg viewBox="0 0 20 20"><path d="M2 2h7.500v7.500H2zM10.500 2H18v7.500h-7.500zM2 10.500h7.500V18H2zM10.500 10.500H18V18h-7.500z" fill="#1583d8" /></svg></button>
        <label class="search">
          <svg viewBox="0 0 12 12"><circle cx="5" cy="5" r="4" fill="none" stroke="#222" stroke-width="1.300" /><path d="M8 8l3.500 3.500" stroke="#222" stroke-width="1.500" /></svg>
          <input placeholder="Search" aria-label="Search" />
          <svg class="heart" viewBox="0 0 28 16"><path d="M2 2Q0 8 5 9Q9 8 8 2M5 9Q6 15 11 14Q14 13 14 9" fill="none" stroke="#6a9ab8" stroke-width="1.500" /><path d="M19 15Q9 9 12 4Q15 0 19 4Q23-1 26.500 4Q29 9 19 15z" fill="#d43434" /><path d="M14 5q2-2 3 0" stroke="#ff9a8a" fill="none" /><path d="M17 13q1-6 4-8" fill="none" stroke="#fbd0c8" stroke-width=".8" /></svg>
        </label>
        <button aria-label="File Explorer" class="run"><svg viewBox="0 0 20 20"><path d="M1 2h7l2 2h9v14H1z" fill="#e7a828" /><path d="M1 6h18v12H1z" fill="#fad258" /><path d="M5 12h10q2 0 2 2v4H3v-4q0-2 2-2z" fill="#2374b8" /><path d="M6 16h8" stroke="#7cc2f0" stroke-width="2" /></svg></button>
        <button aria-label="Chrome"><svg viewBox="0 0 20 20"><circle cx="10" cy="10" r="9" fill="#e2463a" /><path d="M10 10L2.200 5.500A9 9 0 0 0 10 19z" fill="#2fa150" /><path d="M10 10L10 19A9 9 0 0 0 17.800 5.500L10 5.500z" fill="#f7c52c" /><path d="M10 10L6 12.500 10 19 14 12z" fill="#2fa150" /><circle cx="10" cy="10" r="4.600" fill="#fff" /><circle cx="10" cy="10" r="3.600" fill="#3b7de8" /></svg></button>
        <button aria-label="Surpac" class="run"><svg viewBox="0 0 20 20"><path d="M2 4l13-3 4 3-2 12-11 3-4-4z" fill="#bc2e26" /><path d="M2 4l13-3 4 3-13 3z" fill="#d8584c" /><path d="M10 6v11M5 12l12-3" stroke="#e59a90" stroke-width=".8" /><path d="M6 9l3-1v3l-3 1z" fill="#f3d0c8" /></svg></button>
        <button aria-label="Notepad" class="run now"><svg viewBox="0 0 20 20"><rect x="3" y="3" width="14" height="15" fill="#35b3d8" /><rect x="3" y="16" width="14" height="3" fill="#e0c48a" /><path d="M4 1.500h2v3H4zM8 1.500h2v3H8zM12 1.500h2v3h-2z" fill="#245a78" /><path d="M5 7h10M5 9.500h10M5 12h10M5 14.500h7" stroke="#0d6a94" stroke-width="1.200" /></svg></button>
      </div>
      <div class="tray">
        <svg viewBox="0 0 12 12"><path d="M2.500 8L6 4.500 9.500 8" fill="none" stroke="#222" stroke-width="1.300" /></svg>
        <svg class="wifi" viewBox="0 0 12 12"><path d="M1 5Q6 0 11 5M2.700 7Q6 3.500 9.300 7M4.300 8.700Q6 7 7.700 8.700" fill="none" stroke="#222" /><circle cx="6" cy="10.300" r=".9" /></svg>
        <svg viewBox="0 0 12 12"><path d="M1 4.500h2L6 2v8L3 7.500H1z" fill="none" stroke="#222" /><path d="M8 4q1.500 2 0 4M10 2.500q2.500 3.500 0 7" fill="none" stroke="#777" stroke-width=".8" /></svg>
        <svg viewBox="0 0 12 12"><rect x="1" y="4" width="9" height="6" rx="1" fill="#222" /><path d="M10.500 6v2M3 1v4M1 3l4 0" stroke="#222" stroke-width="1.400" /></svg>
        <svg class="bell" viewBox="0 0 12 12"><path d="M6 0Q2 1 2.500 6L1 9h10L9.500 6Q10 1 6 0zM4.500 10h3q-1.500 3-3 0z" fill="#124a8c" /></svg>
      </div>
    </div>

    <div class="notepad">
      <div class="nptitle">
        <svg class="npicon" viewBox="0 0 12 14"><rect x="1" y="2" width="10" height="10" fill="#39b4da" /><rect x="1" y="11" width="10" height="2" fill="#d8c8a0" /><path d="M2 1.500h8" stroke="#27617e" stroke-width="2" stroke-dasharray="1 1" /><path d="M3 5h6M3 7h6M3 9h5" stroke="#116c92" /></svg>
        <div class="nptab"><span>geostatistik_limonite.not</span><i></i></div>
        <button class="add" aria-label="New tab"><svg viewBox="0 0 8 8"><path d="M4 0v8M0 4h8" /></svg></button>
        <div class="winbtns np">
          <button aria-label="Minimise"><svg viewBox="0 0 8 8"><path d="M1 4h6" /></svg></button>
          <button aria-label="Maximise"><svg viewBox="0 0 8 8"><rect x="1" y="1" width="6" height="6" /></svg></button>
          <button aria-label="Close"><svg viewBox="0 0 8 8"><path d="M.5.5l7 7M7.500.5l-7 7" /></svg></button>
        </div>
      </div>
      <div class="npmenu">
        <button>File</button><button>Edit</button><button>View</button>
        <button class="cog" aria-label="Settings"><svg viewBox="0 0 12 12"><path d="M5 1h2l.5 1.500 1.500.8 1.500-.6 1 1.800-1 1v1.200l1 1-1 1.800-1.500-.6-1.500.8L7 11.200H5l-.5-1.500-1.500-.8-1.500.6-1-1.800 1-1V5.500l-1-1 1-1.800 1.500.6 1.500-.8z" fill="none" stroke="#333" stroke-width=".9" /><circle cx="6" cy="6" r="1.700" fill="none" stroke="#333" stroke-width=".9" /></svg></button>
      </div>
      <textarea v-model="report" aria-label="Text editor" spellcheck="false" wrap="off"></textarea>
      <div class="npstatus"><span>Ln 1, Col 75</span><span class="chars">963 characters</span><span class="zoom">100%</span><span class="eol">Windows (CRLF)</span><span class="enc">UTF-8</span></div>
    </div>
  </div>
</template>

<style>
html, body { margin: 0; overflow: hidden; }
</style>

<style scoped>
* { box-sizing: border-box; }
button, input, select, textarea { font: inherit; color: inherit; border: 0; padding: 0; margin: 0; background: none; outline: 0; }
ul, p, h2 { margin: 0; padding: 0; list-style: none; font: inherit; }
svg { display: block; flex: none; }
.desktop { position: relative; height: 100vh; min-height: 560px; display: flex; flex-direction: column; overflow: hidden; background: #f0f0f0; color: #111; font: 7px/10px "Liberation Sans", Arial, sans-serif; }
.app { flex: 1; min-height: 0; display: flex; flex-direction: column; }

.titlebar { height: 15px; flex: none; display: flex; align-items: center; gap: 4px; background: #f3f3f3; color: #888; font: 8px/15px Roboto, "Open Sans", sans-serif; }
.logo { width: 11px; height: 11px; margin-left: 1px; }
.winbtns { margin-left: auto; display: flex; }
.winbtns button { width: 30px; display: flex; justify-content: center; }
.winbtns svg { width: 8px; height: 8px; fill: none; stroke: #777; stroke-width: 1; }
.titlebar .winbtns { margin-right: 2px; }
.menubar { height: 16px; flex: none; display: flex; align-items: center; gap: 10px; }
.menubar .grip { width: 0; margin: 0; }
.menubar button { white-space: nowrap; }

.toolbars { flex: none; height: 74px; }
.toolbar { height: 24px; display: flex; align-items: center; }
.tool { width: 23px; height: 23px; flex: none; display: flex; align-items: center; justify-content: center; }
.tool.half { width: 22px; }
.tool svg { width: 21px; height: 21px; }
.tool.on { background: #9fd3f5; border: 1px solid #3f9cdc; }
.grip { flex: none; width: 10px; height: 18px; display: flex; justify-content: center; }
.grip::before { content: ''; width: 2px; background: repeating-linear-gradient(#b4b4b4 0 1px, #f0f0f0 1px 3px); }
.grip.first { width: 6px; }
.sep { flex: none; width: 4px; height: 20px; border-left: 1px solid #b8b8b8; }
.nudge { flex: none; width: 5px; }
.caret { flex: none; width: 14px; height: 20px; display: flex; align-items: center; justify-content: center; }
.caret::before { content: ''; border: 2px solid transparent; border-top-color: #111; border-bottom: 0; }
.sliders { display: flex; align-items: center; gap: 11px; padding-left: 7px; white-space: nowrap; }
.sliders input { appearance: none; width: 26px; height: 14px; background: linear-gradient(#777, #777) center / 100% 1px no-repeat; }
.sliders input::-webkit-slider-thumb { appearance: none; width: 6px; height: 13px; background: #f4f4f4; border: 1px solid #ddd; border-right-color: #555; border-bottom-color: #555; }

.body { flex: 1; min-height: 0; display: flex; }
.side { width: 173px; flex: none; display: flex; flex-direction: column; }
.panel { border: 1px solid #b4b4b4; border-top: 2px solid #c4c4c4; display: flex; flex-direction: column; }
.head { height: 16px; flex: none; display: flex; align-items: center; gap: 4px; padding: 0 7px 0 4px; border-bottom: 1px solid #b4b4b4; color: #222; }
.push { margin-left: auto; margin-right: 2px; }
.hi { width: 9px; height: 9px; }
.nav { flex: 1; min-height: 0; }
.filter { appearance: none; height: 14px; flex: none; margin-top: 1px; padding-left: 2px; background: #fff; border-bottom: 1px solid #999; background-image: linear-gradient(45deg, transparent 45%, #666 45% 55%, transparent 55%), linear-gradient(-45deg, transparent 45%, #666 45% 55%, transparent 55%); background-size: 3px 3px; background-position: right 6px center, right 3px center; background-repeat: no-repeat; }
.treebox { flex: 1; min-height: 0; display: grid; grid-template: minmax(0, 1fr) 8px / 1fr 12px; }
.tree { min-height: 0; padding-top: 1px; background: #fff; overflow: hidden; background-image: repeating-linear-gradient(#aaa 0 1px, transparent 1px 2px), repeating-linear-gradient(#aaa 0 1px, transparent 1px 2px); background-size: 1px 100%, 1px 224px; background-position: 6px 0, 31px 14px; background-repeat: no-repeat; }
.tree li { height: 4.4%; display: flex; align-items: center; white-space: nowrap; }
.tree .bold { font-weight: 700; }
.tree .sel { background: #0a74d0; color: #fff; }
.d1 { padding-left: 15px; }
.d2 { padding-left: 28px; }
.d3 { padding-left: 40px; }
.d4 { padding-left: 53px; }
.exp { width: 12px; flex: none; display: flex; align-items: center; }
.exp i { width: 7px; height: 7px; flex: none; border: 1px solid #aaa; background: linear-gradient(#555, #555) center / 3px 1px no-repeat #fff; }
.exp i.plus { background: linear-gradient(#555, #555) center / 3px 1px no-repeat, linear-gradient(#555, #555) center / 1px 3px no-repeat, #fff; }
.tree .exp::after { content: ''; width: 3px; border-top: 1px dotted #999; }
.twig { width: 10px; margin-right: 2px; flex: none; border-top: 1px dotted #999; }
.ico { width: 10px; height: 9px; }
.lbl { padding-left: 2px; }
.vbar { width: 2px; height: 85px; margin: 52px 0 0 5px; background: #777; }
.hbar { height: 2px; margin: 4px 16px 0 11px; background: #999; }
.tabs { height: 17px; flex: none; display: flex; align-items: center; padding-left: 3px; }
.tab { height: 15px; display: flex; align-items: center; gap: 2px; padding: 0 3px; border-right: 1px solid #999; }
.tab svg { width: 12px; height: 11px; }
.tab.cur { background: #e6e6e6; border-left: 1px solid #aaa; border-bottom: 1px solid #999; }

.props { height: 98px; flex: none; margin-top: 2px; }
.props table { height: 76px; margin-top: 1px; border-collapse: collapse; table-layout: fixed; width: 100%; }
.props th { text-align: left; padding: 0 0 0 2px; font-weight: 700; color: #777; }
.props th .exp { display: inline-flex; width: 9px; }
.props td { padding: 0 0 0 12px; background: #fafafa; border-bottom: 1px solid #eee; line-height: 9px; white-space: nowrap; }
.props td + td { padding-left: 0; }
.ro { color: #777; }
.about { height: 43px; flex: none; margin-top: 3px; padding: 2px 1px; border: 1px solid #b4b4b4; border-top: 2px solid #c4c4c4; display: flex; flex-direction: column; }
.layers { height: 97px; flex: none; margin-top: 2px; }
.layerlist { margin-top: 1px; background: #fff; }
.layerlist li { height: 14px; display: flex; align-items: center; gap: 2px; padding-left: 1px; }
.layerlist span { padding-left: 5px; }
.layerlist .active { font-weight: 700; font-style: italic; }
.chk { width: 10px; height: 10px; }

.work { flex: 1; min-width: 0; margin-left: 3px; display: flex; flex-direction: column; }
.viewport { flex: 1; min-height: 0; border: 2px solid #18a048; overflow: hidden; }
.viewport svg { width: 100%; height: 100%; }
.viewport path { fill: none; }
.viewport text { fill: #f0f0f0; font: 9px "DejaVu Sans Mono", monospace; }
.viewport .fz { fill: #6a78d8; }
.viewport .fx { fill: #c03030; }
.viewport .fy { fill: #30a040; }
.az { stroke: #5a6ac8; }
.ax { stroke: #a02020; }
.ay { stroke: #208030; }
.white { stroke: #d4d4d4; stroke-width: 1; }
.blue { stroke: #1414a8; stroke-width: 1; }
.collar { fill: none; stroke: #bbb; stroke-width: 1; }
.yel { stroke: #e8da3c; stroke-width: 2; }
.grn { stroke: #1fc83c; stroke-width: 2; }
.red { stroke: #c82440; stroke-width: 2; }
.log { position: relative; height: 73px; flex: none; margin-top: 4px; background: #fff; border: 1px solid #999; border-bottom-width: 2px; color: #222; }
.log p { padding-left: 1px; white-space: nowrap; height: 10px; }
.thumb { position: absolute; right: 4px; bottom: 12px; width: 1px; height: 10px; background: #555; }
.cmd { height: 13px; flex: none; padding-left: 1px; background: #fff; border: 1px solid #bbb; border-top: 0; }
.planes { width: 15px; height: 48px; flex: none; margin-left: 3px; display: flex; flex-direction: column; align-items: center; gap: 4px; padding-top: 3px; border: 1px solid #bbb; border-right: 0; color: #666; }
.planes svg { width: 10px; height: 10px; }
.planes span { writing-mode: vertical-rl; }

.status { height: 19px; flex: none; display: flex; align-items: center; border-top: 1px solid #aaa; border-bottom: 1px solid #bbb; }
.coord { width: 76px; height: 14px; display: flex; align-items: center; gap: 2px; border-left: 1px solid #aaa; }
.coord svg { width: 11px; height: 11px; fill: none; stroke-width: 2.500; }
.cell { padding: 1px; border: 1px solid #999; border-right-width: 2px; white-space: nowrap; }
.mode { padding: 0 4px; border-right: 1px solid #bbb; }
.mode:last-child { border-right: 0; }

.taskbar { height: 31px; flex: none; display: grid; grid-template-columns: 1fr auto 1fr; align-items: center; background: linear-gradient(90deg, #e3eefa 0 10%, #d3e2f8 28%, #dfe0f0 38%, #d3def6 55%, #d8dcf0 68%, #e0ebf8 80%, #dbeaf9); }
.dock { grid-column: 2; display: flex; align-items: center; padding-left: 3px; }
.dock button { position: relative; width: 22px; height: 26px; margin: 0 4px 0 3px; display: flex; align-items: center; justify-content: center; border-radius: 3px; }
.dock button:first-child { margin: 0 5px 0 0; }
.dock svg { width: 18px; height: 18px; }
.run::after { content: ''; position: absolute; bottom: 0; width: 4px; height: 2px; border-radius: 1px; background: #777; }
.now { background: #f4f8fd; }
.now::after { width: 9px; background: #0f6cc0; }
.search { width: 147px; height: 22px; margin-right: 2px; display: flex; align-items: center; border-radius: 11px; background: #f1f5fc; border: 1px solid #dde4f0; padding: 0 4px 0 7px; }
.search svg { width: 10px; height: 10px; }
.search input { flex: 1; min-width: 0; padding-left: 6px; font: 9px/14px "Open Sans", "Noto Sans", sans-serif; color: #555; }
.search input::placeholder { color: #666; }
.search .heart { width: 27px; height: 16px; }
.tray { justify-self: end; display: flex; align-items: center; gap: 4px; padding-right: 13px; }
.tray svg { width: 12px; height: 12px; }
.tray .wifi { margin-left: 5px; }
.tray .bell { margin-left: 3px; }

.notepad { position: absolute; left: 357px; right: 315px; top: 99px; bottom: 31px; display: flex; flex-direction: column; border-radius: 6px; overflow: hidden; border: 1px solid #a9b8c6; background: #f9f9f9; box-shadow: 0 6px 16px rgba(0, 0, 0, .35); font: 8px/12px "Open Sans", "Noto Sans", sans-serif; color: #222; }
.nptitle { height: 27px; flex: none; display: flex; background: #cddeec; }
.npicon { width: 11px; height: 13px; margin: 10px 10px 0; }
.nptab { width: 160px; height: 21px; align-self: flex-end; display: flex; align-items: center; justify-content: space-between; padding: 0 12px 2px 6px; background: #f0f5fa; border-radius: 5px 5px 0 0; }
.nptab i { width: 4px; height: 4px; border-radius: 2px; background: #666; }
.add { width: 32px; display: flex; justify-content: center; padding-top: 13px; }
.add svg { width: 7px; height: 7px; stroke: #333; stroke-width: 1; }
.np { padding-top: 5px; align-items: flex-start; }
.np svg { stroke: #222; }
.npmenu { height: 22px; flex: none; display: flex; align-items: center; gap: 18px; padding: 0 10px 0 9px; background: #f0f5fa; border-bottom: 1px solid #e2e6ea; font-size: 9px; }
.cog { margin-left: auto; }
.cog svg { width: 10px; height: 10px; }
.notepad textarea { flex: 1; min-height: 0; resize: none; overflow: hidden; padding: 10px; white-space: pre; font: 9px/12px "DejaVu Sans Mono", monospace; color: #1c1c1c; }
.npstatus { height: 21px; flex: none; display: flex; align-items: center; padding-left: 14px; border-top: 1px solid #dfe5ea; background: #f2f5f9; color: #666; font-family: Roboto, "Open Sans", sans-serif; }
.npstatus span + span { border-left: 1px solid #e2e6ea; padding-left: 5px; }
.npstatus .chars { margin-left: 8px; flex: 1; }
.npstatus .zoom { width: 45px; }
.npstatus .eol { width: 112px; }
.npstatus .enc { width: 94px; }
</style>
